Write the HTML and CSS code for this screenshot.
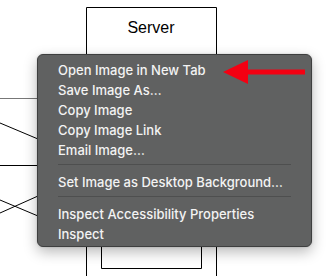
FILE: index.html
```html
<!DOCTYPE html>
<html>
<head>
<meta charset="utf-8">
<link rel="stylesheet" href="styles.css">
</head>
<body>
<div class="canvas">
  <svg class="diagram" width="333" height="276" viewBox="0 0 333 276">
    <g fill="none" stroke="#000" stroke-width="1">
      <path d="M86.5 276 V7.5 H216.5 V276"/>
      <path d="M101.5 200 V268.5 H201.5 V200"/>
      <path d="M0 98.5 H40" stroke="#777"/>
      <path d="M0 123 L38 139"/>
      <path d="M0 165.5 H40"/>
      <path d="M0 200 L38 216"/>
      <path d="M0 213 L38 196"/>
    </g>
    <text x="151" y="33" class="server">Server</text>
  </svg>

  <div class="menu">
    <div class="item">Open Image in New Tab</div>
    <div class="item">Save Image As…</div>
    <div class="item">Copy Image</div>
    <div class="item">Copy Image Link</div>
    <div class="item">Email Image…</div>
    <div class="sep"></div>
    <div class="item">Set Image as Desktop Background…</div>
    <div class="sep"></div>
    <div class="item">Inspect Accessibility Properties</div>
    <div class="item">Inspect</div>
  </div>

  <svg class="arrow" width="90" height="30" viewBox="0 0 90 30">
    <polygon points="0,12 25,0 25,24" fill="#f40012"/>
    <rect x="22" y="9.5" width="60" height="5" fill="#f40012"/>
  </svg>
</div>
</body>
</html>
```

FILE: styles.css
```css
html, body {
  margin: 0;
  padding: 0;
  background: #fff;
}
.canvas {
  position: relative;
  width: 333px;
  height: 276px;
  overflow: hidden;
}
.diagram {
  position: absolute;
  left: 0;
  top: 0;
}
.server {
  font-family: "Liberation Sans", Arial, sans-serif;
  font-size: 16px;
  text-anchor: middle;
  fill: #000;
}
.menu {
  position: absolute;
  left: 37px;
  top: 54px;
  width: 275px;
  height: 193px;
  box-sizing: border-box;
  background: #606161;
  border: 1px solid #3e3f3f;
  border-radius: 6px;
  box-shadow: 0 5px 14px rgba(0, 0, 0, 0.28), 0 0 2px rgba(0, 0, 0, 0.2);
  padding: 5px 0 0 0;
  display: flex;
  flex-direction: column;
  font-family: Inter, "Noto Sans", sans-serif;
  font-size: 13px;
  font-weight: 500;
  color: #f3f3f3;
}
.item {
  height: 20px;
  line-height: 20px;
  padding-left: 20px;
  white-space: nowrap;
}
.sep {
  height: 1px;
  background: #4e4f4f;
  margin: 4px 20px 7px 20px;
}
.arrow {
  position: absolute;
  left: 223px;
  top: 60px;
}
```
